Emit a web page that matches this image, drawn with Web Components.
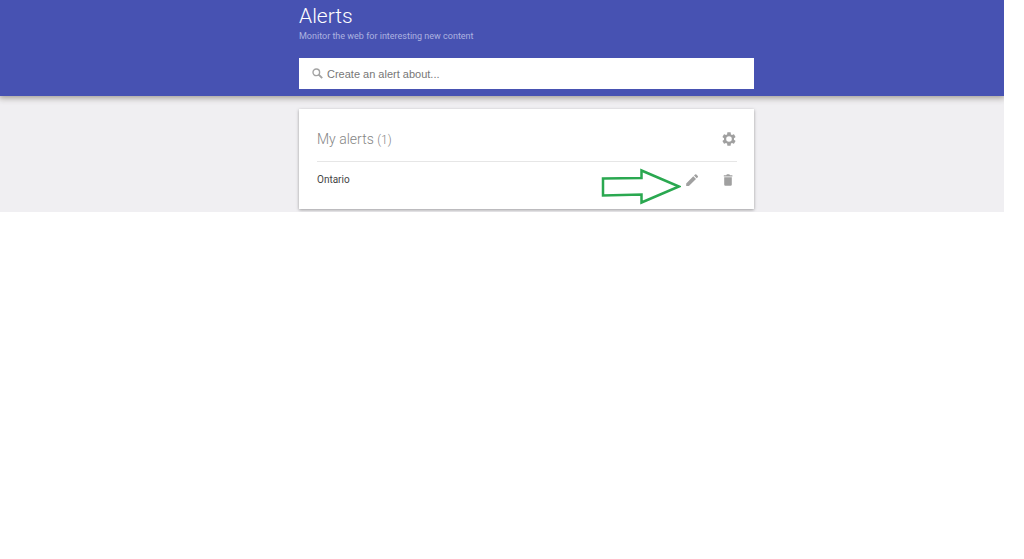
<!DOCTYPE html>
<html lang="en">
<head>
<meta charset="utf-8">
<title>Alerts</title>
<style>
body { margin: 0; background: #fff; font-family: Roboto, "Liberation Sans", sans-serif; }
</style>
</head>
<body>
<alerts-page>
  <alerts-header heading="Alerts" tagline="Monitor the web for interesting new content">
    <alert-search></alert-search>
  </alerts-header>
  <alerts-card heading="My alerts" count="1">
    <alert-row>Ontario</alert-row>
  </alerts-card>
</alerts-page>
<script>
const define = (name, html, setup) => customElements.define(name, class extends HTMLElement {
  constructor() {
    super();
    this.attachShadow({ mode: "open" }).innerHTML = html;
  }
  connectedCallback() { if (setup) setup(this, this.shadowRoot); }
});

define("alerts-page", `
<style>
  :host { display: block; margin-right: 20px; background: #f0eff2; padding-bottom: 3px; --column-start: calc(50% - 203px); }
</style>
<slot></slot>`);

define("alerts-header", `
<style>
  :host { display: block; background: #4752b2; color: #fff; padding: 2px 20px 7px var(--column-start); box-shadow: 0 1px 6px 1px rgba(60, 50, 30, .45); clip-path: inset(0 0 -12px 0); }
  h1 { margin: 0; font-size: 21px; line-height: 28px; font-weight: 300; }
  p { margin: 0 0 16px; font-size: 9px; line-height: 12px; color: #adb2e0; }
</style>
<header><h1></h1><p></p><slot></slot></header>`, (el, root) => {
  root.querySelector("h1").textContent = el.getAttribute("heading");
  root.querySelector("p").textContent = el.getAttribute("tagline");
});

define("alert-search", `
<style>
  :host { display: block; max-width: 455px; }
  label { display: flex; align-items: center; gap: 4px; height: 31px; padding: 0 13px; background: #fff; box-sizing: border-box; }
  svg { flex: none; width: 11px; height: 11px; }
  input { flex: 1; min-width: 0; border: 0; padding: 0; outline: 0; background: none; font: 11px/16px "Liberation Sans", Arial, sans-serif; color: #333; }
  input::placeholder { color: #777; opacity: 1; }
</style>
<label>
  <svg viewBox="0 0 11 11" fill="none" stroke="#a3a3a3" aria-hidden="true"><circle cx="4.300" cy="4.300" r="3.300" stroke-width="1.400"/><path d="M6.700 6.700 10.200 10.200" stroke-width="1.900"/></svg>
  <input type="text" placeholder="Create an alert about..." aria-label="Create an alert about">
</label>`);

define("alerts-card", `
<style>
  :host { display: block; padding: 13px 20px 0 var(--column-start); }
  section { max-width: 455px; box-sizing: border-box; padding: 8px 17px 11px 18px; background: #fff; box-shadow: 0 1px 3px rgba(0, 0, 0, .35); }
  .top { display: flex; align-items: center; justify-content: space-between; height: 44px; border-bottom: 1px solid #e6e6e6; }
  h2 { margin: 0; font-size: 14px; line-height: 20px; font-weight: 300; color: #858585; }
  span { font-size: 12px; }
  button { display: grid; place-items: center; border: 0; padding: 0; background: none; }
  svg { width: 16px; height: 16px; }
</style>
<section>
  <div class="top">
    <h2></h2>
    <button type="button" aria-label="Settings"><svg viewBox="0 0 24 24" fill="#a0a0a0"><path d="M19.43 12.98c.04-.32.07-.64.07-.98s-.03-.66-.07-.98l2.11-1.65c.19-.15.24-.42.12-.64l-2-3.46c-.12-.22-.39-.3-.61-.22l-2.49 1c-.52-.4-1.08-.73-1.69-.98l-.38-2.65C14.46 2.18 14.25 2 14 2h-4c-.25 0-.46.18-.49.42l-.38 2.65c-.61.25-1.17.59-1.69.98l-2.49-1c-.23-.09-.49 0-.61.22l-2 3.46c-.13.22-.07.49.12.64l2.11 1.65c-.04.32-.07.65-.07.98s.03.66.07.98l-2.11 1.65c-.19.15-.24.42-.12.64l2 3.46c.12.22.39.3.61.22l2.49-1c.52.4 1.08.73 1.69.98l.38 2.65c.03.24.24.42.49.42h4c.25 0 .46-.18.49-.42l.38-2.65c.61-.25 1.17-.59 1.69-.98l2.49 1c.23.09.49 0 .61-.22l2-3.46c.12-.22.07-.49-.12-.64l-2.11-1.65zM12 16.200a4.200 4.200 0 1 1 0-8.400 4.200 4.200 0 0 1 0 8.400z"/></svg></button>
  </div>
  <slot></slot>
</section>`, (el, root) => {
  root.querySelector("h2").innerHTML = `${el.getAttribute("heading")} <span>(${el.getAttribute("count")})</span>`;
});

define("alert-row", `
<style>
  :host { display: flex; align-items: center; position: relative; height: 36px; font-size: 10px; line-height: 14px; color: #444; }
  .name { flex: 1; }
  .actions { display: flex; gap: 20px; padding-right: 1px; }
  button { display: grid; place-items: center; border: 0; padding: 0; background: none; width: 16px; height: 16px; }
  .actions svg { width: 16px; height: 16px; }
  .pointer { position: absolute; right: 56px; top: 6px; width: 80px; height: 38px; pointer-events: none; }
</style>
<span class="name"><slot></slot></span>
<div class="actions">
  <button type="button" aria-label="Edit"><svg viewBox="0 0 16 16" fill="#a0a0a0"><path d="M2.200 11.400 9.300 4.300 12 7 4.900 14.100H2.200zM10 3.600l1.100-1.100q.7-.6 1.300 0l1.400 1.400q.6.700 0 1.300l-1.100 1.100z"/></svg></button>
  <button type="button" aria-label="Delete"><svg viewBox="0 0 16 16" fill="#a0a0a0"><path d="M3.800 3.200h2.400l.7-.9h2.400l.7.9h2.400v1.300H3.800zM4.200 5.200h7.600v7.300q0 1.200-1.200 1.200H5.400q-1.200 0-1.200-1.200z"/></svg></button>
</div>
<svg class="pointer" viewBox="0 0 80 38" fill="none" stroke="#2aa850" stroke-width="2.500" aria-hidden="true"><path d="M2 10.500 40.500 10V2.500L78 18.500 40.500 34.500V26.500L2 27.500z"/></svg>`);
</script>
</body>
</html>
